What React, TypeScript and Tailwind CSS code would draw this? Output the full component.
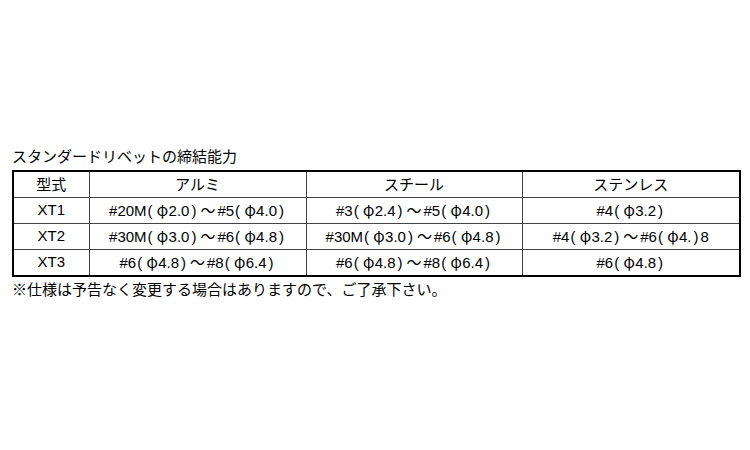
import React from "react";

const rows = [
  ["XT1", "#20M(φ2.0)～#5(φ4.0)", "#3(φ2.4)～#5(φ4.0)", "#4(φ3.2)"],
  ["XT2", "#30M(φ3.0)～#6(φ4.8)", "#30M(φ3.0)～#6(φ4.8)", "#4(φ3.2)～#6(φ4.)8"],
  ["XT3", "#6(φ4.8)～#8(φ6.4)", "#6(φ4.8)～#8(φ6.4)", "#6(φ4.8)"],
];

const jp = { fontFamily: '"Noto Sans CJK JP", sans-serif' };

function Cell({ text }: { text: string }) {
  return (
    <>
      {Array.from(text).map((ch, i) => {
        if (ch === "(")
          return (
            <span key={i} className="inline-block w-[10px] text-left pl-[1px]">
              (
            </span>
          );
        if (ch === ")")
          return (
            <span key={i} className="inline-block w-[9px] text-left pl-[2px]">
              )
            </span>
          );
        if (ch === "φ")
          return (
            <span key={i} className="inline-block w-[12px] text-center" style={jp}>
              φ
            </span>
          );
        if (ch === "～")
          return (
            <span key={i} className="inline-block w-[19px] text-center" style={jp}>
              ～
            </span>
          );
        return <React.Fragment key={i}>{ch}</React.Fragment>;
      })}
    </>
  );
}

export default function App() {
  return (
    <div
      className="w-[750px] h-[450px] bg-white text-black pt-[146px] pl-[12px]"
      style={{ fontFamily: '"Liberation Sans", "Noto Sans CJK JP", sans-serif' }}
    >
      <div className="text-[15px] leading-[20px] h-[24px]" style={jp}>
        スタンダードリベットの締結能力
      </div>
      <table className="w-[727px] border-collapse border-2 border-black text-[15px] table-fixed">
        <colgroup>
          <col className="w-[76px]" />
          <col className="w-[217px]" />
          <col className="w-[216px]" />
          <col className="w-[218px]" />
        </colgroup>
        <thead>
          <tr className="h-[26px]">
            {["型式", "アルミ", "スチール", "ステンレス"].map((h) => (
              <th
                key={h}
                className="font-normal text-center border border-[#444] text-[15px] p-0"
                style={jp}
              >
                {h}
              </th>
            ))}
          </tr>
        </thead>
        <tbody>
          {rows.map((r) => (
            <tr key={r[0]} className="h-[25px]">
              {r.map((c, i) => (
                <td key={i} className="text-center border border-[#444] p-0 leading-[24px] whitespace-nowrap">
                  {i === 0 ? c : <Cell text={c} />}
                </td>
              ))}
            </tr>
          ))}
        </tbody>
      </table>
      <div className="text-[15px] leading-[24px]" style={jp}>
        ※仕様は予告なく変更する場合はありますので、ご了承下さい。
      </div>
    </div>
  );
}
